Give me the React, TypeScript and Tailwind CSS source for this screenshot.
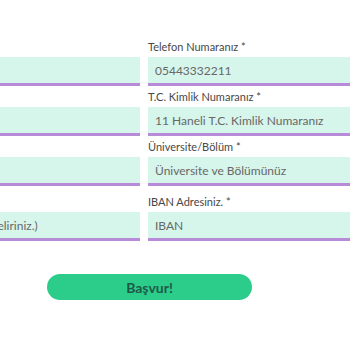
import React from 'react'

const fields = [
  { left: { label: '', ph: '' }, right: { label: 'Telefon Numaranız *', ph: '05443332211' } },
  { left: { label: '', ph: '' }, right: { label: 'T.C. Kimlik Numaranız *', ph: '11 Haneli T.C. Kimlik Numaranız' } },
  { left: { label: '', ph: '' }, right: { label: 'Üniversite/Bölüm *', ph: 'Üniversite ve Bölümünüz' } },
  { left: { label: '', ph: '(Aylık net geliriniz.)' }, right: { label: 'IBAN Adresiniz. *', ph: 'IBAN' } },
]

function Field({ label, ph, extra }: { label: string; ph: string; extra?: boolean }) {
  return (
    <div className={extra ? 'mt-[5px]' : ''}>
      <div className="h-[16px] text-[11px] leading-[16px] text-[#474747]">{label}</div>
      <div className="mt-[2px] flex h-[29px] w-full items-center overflow-hidden whitespace-nowrap border-b-[3px] border-[#b88bd8] bg-[#d6f5eb] px-[7px] pt-[2px] text-[12px] text-[#686868]">
        {ph}
      </div>
    </div>
  )
}

export default function App() {
  return (
    <div
      className="h-[350px] w-[350px] overflow-hidden bg-white pt-[39px]"
      style={{ fontFamily: 'Lato, "Noto Sans", sans-serif' }}
    >
      <form className="-ml-[68px] w-[436px]">
        <div className="flex flex-col gap-[3px]">
          {fields.map((row, i) => (
            <div key={i} className="grid grid-cols-[208px_220px] gap-x-[8px]">
              <Field label={row.left.label} ph={row.left.ph} extra={i === 3} />
              <Field label={row.right.label} ph={row.right.ph} extra={i === 3} />
            </div>
          ))}
        </div>
      </form>
      <button
        type="button"
        className="ml-[47px] mt-[33px] h-[26px] w-[205px] rounded-full bg-[#2ccd8b] text-[14px] font-bold text-[#1d5a48]"
      >
        Başvur!
      </button>
    </div>
  )
}
